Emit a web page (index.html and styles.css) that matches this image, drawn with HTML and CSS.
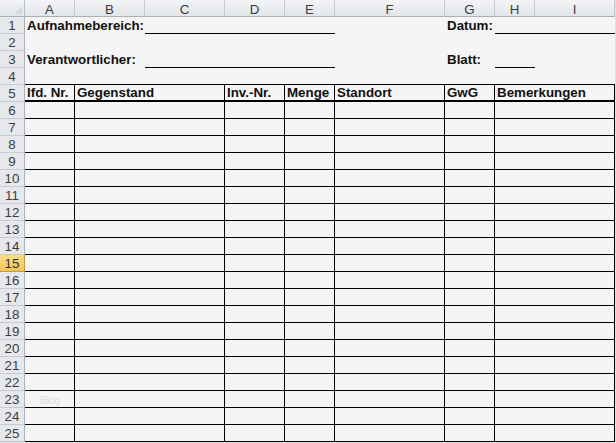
FILE: index.html
```html
<!DOCTYPE html>
<html lang="de">
<head>
<meta charset="utf-8">
<title>Inventarliste</title>
<link rel="stylesheet" href="styles.css">
</head>
<body>
<div class="sheet">
  <div class="row colhead">
    <div class="corner"><span class="tri"></span></div>
    <div class="ch">A</div><div class="ch">B</div><div class="ch">C</div><div class="ch">D</div><div class="ch">E</div><div class="ch">F</div><div class="ch">G</div><div class="ch">H</div><div class="ch">I</div>
  </div>
  <div class="row">
    <div class="rh">1</div>
    <div class="c s2">Aufnahmebereich:</div>
    <div class="c s3 u"></div>
    <div class="c"></div>
    <div class="c">Datum:</div>
    <div class="c s2 u"></div>
  </div>
  <div class="row">
    <div class="rh">2</div>
    <div class="c s9"></div>
  </div>
  <div class="row">
    <div class="rh">3</div>
    <div class="c s2">Verantwortlicher:</div>
    <div class="c s3 u"></div>
    <div class="c"></div>
    <div class="c">Blatt:</div>
    <div class="c u"></div>
    <div class="c"></div>
  </div>
  <div class="row">
    <div class="rh">4</div>
    <div class="c s9 u"></div>
  </div>
  <div class="row">
    <div class="rh">5</div>
    <div class="c t th">lfd. Nr.</div>
    <div class="c t th s2">Gegenstand</div>
    <div class="c t th">Inv.-Nr.</div>
    <div class="c t th">Menge</div>
    <div class="c t th">Standort</div>
    <div class="c t th">GwG</div>
    <div class="c t th s2">Bemerkungen</div>
  </div>
  <div class="row"><div class="rh">6</div><div class="c t"></div><div class="c t s2"></div><div class="c t"></div><div class="c t"></div><div class="c t"></div><div class="c t"></div><div class="c t s2"></div></div>
  <div class="row"><div class="rh">7</div><div class="c t"></div><div class="c t s2"></div><div class="c t"></div><div class="c t"></div><div class="c t"></div><div class="c t"></div><div class="c t s2"></div></div>
  <div class="row"><div class="rh">8</div><div class="c t"></div><div class="c t s2"></div><div class="c t"></div><div class="c t"></div><div class="c t"></div><div class="c t"></div><div class="c t s2"></div></div>
  <div class="row"><div class="rh">9</div><div class="c t"></div><div class="c t s2"></div><div class="c t"></div><div class="c t"></div><div class="c t"></div><div class="c t"></div><div class="c t s2"></div></div>
  <div class="row"><div class="rh">10</div><div class="c t"></div><div class="c t s2"></div><div class="c t"></div><div class="c t"></div><div class="c t"></div><div class="c t"></div><div class="c t s2"></div></div>
  <div class="row"><div class="rh">11</div><div class="c t"></div><div class="c t s2"></div><div class="c t"></div><div class="c t"></div><div class="c t"></div><div class="c t"></div><div class="c t s2"></div></div>
  <div class="row"><div class="rh">12</div><div class="c t"></div><div class="c t s2"></div><div class="c t"></div><div class="c t"></div><div class="c t"></div><div class="c t"></div><div class="c t s2"></div></div>
  <div class="row"><div class="rh">13</div><div class="c t"></div><div class="c t s2"></div><div class="c t"></div><div class="c t"></div><div class="c t"></div><div class="c t"></div><div class="c t s2"></div></div>
  <div class="row"><div class="rh">14</div><div class="c t"></div><div class="c t s2"></div><div class="c t"></div><div class="c t"></div><div class="c t"></div><div class="c t"></div><div class="c t s2"></div></div>
  <div class="row"><div class="rh sel">15</div><div class="c t"></div><div class="c t s2"></div><div class="c t"></div><div class="c t"></div><div class="c t"></div><div class="c t"></div><div class="c t s2"></div></div>
  <div class="row"><div class="rh">16</div><div class="c t"></div><div class="c t s2"></div><div class="c t"></div><div class="c t"></div><div class="c t"></div><div class="c t"></div><div class="c t s2"></div></div>
  <div class="row"><div class="rh">17</div><div class="c t"></div><div class="c t s2"></div><div class="c t"></div><div class="c t"></div><div class="c t"></div><div class="c t"></div><div class="c t s2"></div></div>
  <div class="row"><div class="rh">18</div><div class="c t"></div><div class="c t s2"></div><div class="c t"></div><div class="c t"></div><div class="c t"></div><div class="c t"></div><div class="c t s2"></div></div>
  <div class="row"><div class="rh">19</div><div class="c t"></div><div class="c t s2"></div><div class="c t"></div><div class="c t"></div><div class="c t"></div><div class="c t"></div><div class="c t s2"></div></div>
  <div class="row"><div class="rh">20</div><div class="c t"></div><div class="c t s2"></div><div class="c t"></div><div class="c t"></div><div class="c t"></div><div class="c t"></div><div class="c t s2"></div></div>
  <div class="row"><div class="rh">21</div><div class="c t"></div><div class="c t s2"></div><div class="c t"></div><div class="c t"></div><div class="c t"></div><div class="c t"></div><div class="c t s2"></div></div>
  <div class="row"><div class="rh">22</div><div class="c t"></div><div class="c t s2"></div><div class="c t"></div><div class="c t"></div><div class="c t"></div><div class="c t"></div><div class="c t s2"></div></div>
  <div class="row"><div class="rh">23</div><div class="c t"><span class="mark">Blog</span></div><div class="c t s2"></div><div class="c t"></div><div class="c t"></div><div class="c t"></div><div class="c t"></div><div class="c t s2"></div></div>
  <div class="row"><div class="rh">24</div><div class="c t"></div><div class="c t s2"></div><div class="c t"></div><div class="c t"></div><div class="c t"></div><div class="c t"></div><div class="c t s2"></div></div>
  <div class="row"><div class="rh">25</div><div class="c t"></div><div class="c t s2"></div><div class="c t"></div><div class="c t"></div><div class="c t"></div><div class="c t"></div><div class="c t s2"></div></div>
</div>
</body>
</html>
```

FILE: styles.css
```css
html, body {
  margin: 0;
  padding: 0;
  background: #dedfe1;
}
body {
  font-family: "Liberation Sans", Arial, sans-serif;
  font-size: 13.33px;
  color: #111;
}
.sheet {
  width: 615px;
  background: #f5f5f5;
}
.row {
  display: grid;
  grid-template-columns: 25px 50px 70px 80px 60px 50px 110px 50px 40px 80px;
  height: 17px;
}
.corner {
  position: relative;
  box-sizing: border-box;
  height: 17px;
  background: linear-gradient(#f2f3f5, #e3e6ea);
  border-right: 1px solid #b8bec6;
  border-bottom: 1px solid #a9b0b8;
}
.tri {
  position: absolute;
  right: 2px;
  bottom: 2px;
  width: 0;
  height: 0;
  border-left: 8px solid transparent;
  border-bottom: 8px solid #d3d7dc;
}
.ch {
  box-sizing: border-box;
  height: 17px;
  background: linear-gradient(#f3f4f6, #e2e5e9);
  border-right: 1px solid #c6cbd1;
  border-bottom: 1px solid #a9b0b8;
  text-align: center;
  color: #3d3d3d;
  line-height: 15px;
  padding-top: 2px;
  overflow: hidden;
}
.rh {
  box-sizing: border-box;
  height: 17px;
  background: #e6e8eb;
  border-right: 1px solid #a9b0b8;
  border-bottom: 1px solid #c6cbd1;
  text-align: center;
  color: #3d3d3d;
  line-height: 15px;
  padding-top: 1px;
  overflow: hidden;
}
.rh.sel {
  background: linear-gradient(#f9dc86, #f1c659);
  border-right-color: #c29b3a;
  border-bottom-color: #c29b3a;
  color: #333;
}
.c {
  box-sizing: border-box;
  height: 17px;
  border-bottom: 1px solid transparent;
  padding: 1px 0 0 2px;
  line-height: 15px;
  font-weight: bold;
  white-space: nowrap;
}
.s2 { grid-column: span 2; }
.s3 { grid-column: span 3; }
.s9 { grid-column: span 9; }
.u { border-bottom-color: #000; }
.t {
  border-right: 1px solid #000;
  border-bottom-color: #000;
}
.th {
  border-bottom-width: 2px;
  padding-top: 0;
}
.mark {
  display: inline-block;
  margin-left: 13px;
  font-size: 10px;
  font-weight: normal;
  color: #dcdcdc;
}
```
